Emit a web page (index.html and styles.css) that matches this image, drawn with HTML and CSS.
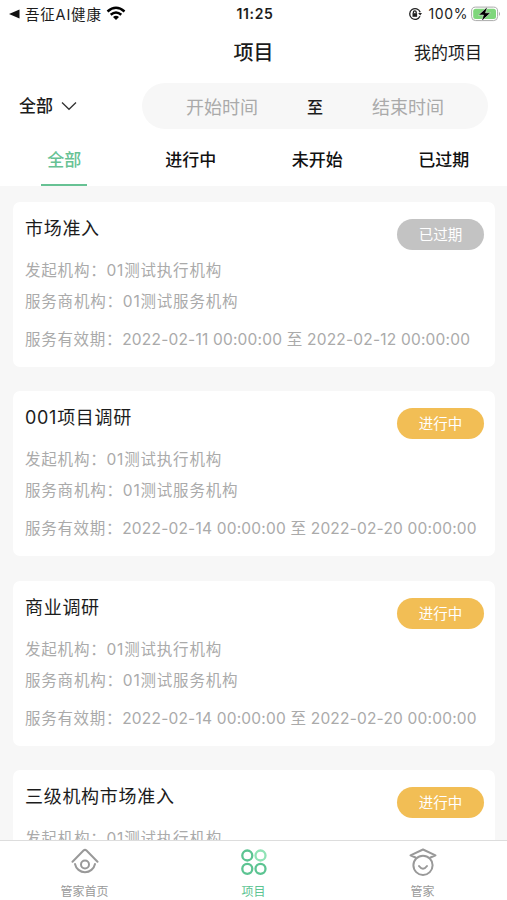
FILE: index.html
```html
<!DOCTYPE html>
<html lang="zh-CN">
<head>
    <meta charset="UTF-8">
    <meta name="viewport" content="width=device-width, initial-scale=1.0">
    <title>项目</title>
    <link rel="stylesheet" href="styles.css">
</head>

<body>
    <div class="status-bar">
        <div class="status-left">
            <svg width="11" height="10" viewBox="0 0 11 10"><path d="M0 5 L10.500 0.500 V9.500 Z" fill="#111"/></svg>
            <span class="status-app">吾征AI健康</span>
            <svg class="wifi" width="20" height="15" viewBox="0 0 20 15" fill="none" stroke="#000" stroke-width="2.500">
                <path d="M1.500 5.500 Q10 -2 18.500 5.500"/>
                <path d="M4.700 8.800 Q10 4.200 15.300 8.800"/>
                <path d="M10 14 L7 11 Q10 8.700 13 11 Z" fill="#000" stroke="none"/>
            </svg>
        </div>
        <div class="status-time">11:25</div>
        <div class="status-right">
            <svg width="14" height="14" viewBox="0 0 14 14" fill="none" stroke="#222" stroke-width="1.300">
                <path d="M12 9.300 A5.400 5.400 0 1 1 12.200 5.200"/>
                <path d="M10.200 6 H14 L12.200 8.500 Z" fill="#222" stroke="none"/>
                <rect x="4.500" y="6.200" width="4.600" height="3.600" fill="#222" stroke="none"/>
                <path d="M5.400 6.500 V5.200 A1.400 1.400 0 0 1 8.200 5.200 V6.500"/>
            </svg>
            <span class="status-percent">100%</span>
            <svg width="30" height="16" viewBox="0 0 30 16">
                <rect x="0.600" y="1.100" width="26" height="13.500" rx="4" fill="#fff" stroke="#aaa"/>
                <rect x="2.200" y="2.700" width="22.800" height="10.300" rx="2.500" fill="#7fd67c"/>
                <path d="M28 5.700 Q30 7.800 28 10 Z" fill="#aaa"/>
                <path d="M16.500 0.800 L7.500 9 H12.500 L10.500 15.200 L19.500 6.800 H14.500 Z" fill="#000" stroke="#fff" stroke-width="0.500"/>
            </svg>
        </div>
    </div>

    <div class="nav-bar">
        <h1>项目</h1>
        <a class="my-project">我的项目</a>
    </div>

    <div class="filter">
        <div class="filter-type">
            <span>全部</span>
            <svg width="16" height="10" viewBox="0 0 16 10" fill="none" stroke="#333" stroke-width="1.300"><path d="M1 1.500 L8 8.300 L15 1.500"/></svg>
        </div>
        <div class="date-range">
            <span class="date">开始时间</span>
            <span class="to">至</span>
            <span class="date">结束时间</span>
        </div>
    </div>

    <div class="tabs">
        <div class="tab active"><span>全部</span></div>
        <div class="tab"><span>进行中</span></div>
        <div class="tab"><span>未开始</span></div>
        <div class="tab"><span>已过期</span></div>
    </div>

    <div class="list">
        <div class="card">
            <div class="card-head">
                <h2>市场准入</h2>
                <span class="badge expired">已过期</span>
            </div>
            <p>发起机构：01测试执行机构</p>
            <p>服务商机构：01测试服务机构</p>
            <p class="period">服务有效期：<span class="dates">2022-02-11 00:00:00 至 2022-02-12 00:00:00</span></p>
        </div>
        <div class="card">
            <div class="card-head">
                <h2>001项目调研</h2>
                <span class="badge">进行中</span>
            </div>
            <p>发起机构：01测试执行机构</p>
            <p>服务商机构：01测试服务机构</p>
            <p class="period">服务有效期：<span class="dates">2022-02-14 00:00:00 至 2022-02-20 00:00:00</span></p>
        </div>
        <div class="card">
            <div class="card-head">
                <h2>商业调研</h2>
                <span class="badge">进行中</span>
            </div>
            <p>发起机构：01测试执行机构</p>
            <p>服务商机构：01测试服务机构</p>
            <p class="period">服务有效期：<span class="dates">2022-02-14 00:00:00 至 2022-02-20 00:00:00</span></p>
        </div>
        <div class="card">
            <div class="card-head">
                <h2>三级机构市场准入</h2>
                <span class="badge">进行中</span>
            </div>
            <p>发起机构：01测试执行机构</p>
        </div>
    </div>

    <div class="tab-bar">
        <div class="tab-item">
            <svg width="28" height="28" viewBox="0 0 28 28" fill="none" stroke="#999" stroke-width="2" stroke-linecap="round" stroke-linejoin="round">
                <path d="M1.500 13.700 L12.500 2.500 Q14 1.200 15.500 2.500 L26.500 13.700"/>
                <path d="M4 16 A10.200 10.200 0 0 0 24 16"/>
                <circle cx="14" cy="16.500" r="4"/>
            </svg>
            <span>管家首页</span>
        </div>
        <div class="tab-item current">
            <svg width="28" height="28" viewBox="0 0 28 28" fill="none" stroke="#5cc492" stroke-width="2.300">
                <circle cx="7.300" cy="7.500" r="5"/>
                <circle cx="20.500" cy="7.500" r="5" stroke="#8fe3b5"/>
                <circle cx="7.300" cy="20.800" r="5"/>
                <circle cx="20.500" cy="20.800" r="5"/>
            </svg>
            <span>项目</span>
        </div>
        <div class="tab-item">
            <svg width="28" height="28" viewBox="0 0 28 28" fill="none" stroke="#999" stroke-width="2" stroke-linecap="round" stroke-linejoin="round">
                <path d="M6.500 9.500 L1.500 7.300 L14 1.500 L26.500 7.300 L21.500 9.500"/>
                <circle cx="14" cy="17.300" r="9.600"/>
                <path d="M10 18 Q14 23.500 18 18"/>
            </svg>
            <span>管家</span>
        </div>
    </div>
</body>
</html>
```

FILE: styles.css
```css
* {
    box-sizing: border-box;
}
body {
    margin: 0;
    height: 900px;
    display: flex;
    flex-direction: column;
    overflow: hidden;
    background-color: #fff;
    color: #1c1c1c;
    font-family: Inter, "Noto Sans CJK SC", sans-serif;
}
h1, h2, p {
    margin: 0;
}
svg {
    display: block;
    flex: none;
}
.status-bar {
    height: 27px;
    flex: none;
    display: grid;
    grid-template-columns: 1fr auto 1fr;
    align-items: center;
    padding: 0 6px 0 9px;
}
.status-left, .status-right {
    display: flex;
    align-items: center;
}
.status-right {
    justify-content: flex-end;
}
.status-app {
    margin-left: 5px;
    font-size: 14.5px;
    letter-spacing: 0.8px;
    white-space: nowrap;
}
.wifi {
    margin-left: 4px;
}
.status-time {
    font-size: 14px;
    font-weight: 600;
    letter-spacing: 0.6px;
}
.status-percent {
    margin: 0 3px 0 6px;
    font-size: 14px;
    letter-spacing: 0.6px;
}
.nav-bar {
    height: 49px;
    flex: none;
    display: grid;
    grid-template-columns: 1fr auto 1fr;
    align-items: center;
    padding: 0 25px;
}
.nav-bar h1 {
    grid-column: 2;
    font-size: 20px;
    font-weight: 500;
}
.my-project {
    justify-self: end;
    font-size: 17px;
}
.filter {
    height: 59px;
    flex: none;
    display: flex;
    align-items: center;
    justify-content: space-between;
    padding: 0 19px;
}
.filter-type {
    display: flex;
    align-items: center;
    gap: 8px;
    font-size: 17px;
    font-weight: 500;
    line-height: 24px;
}
.date-range {
    width: 346px;
    height: 46px;
    display: grid;
    grid-template-columns: 160px 26px 160px;
    align-items: center;
    text-align: center;
    border-radius: 23px;
    background-color: #f7f7f7;
}
.date {
    font-size: 18px;
    color: #aaa;
}
.to {
    font-size: 16px;
    font-weight: 500;
}
.tabs {
    height: 51px;
    flex: none;
    display: grid;
    grid-template-columns: repeat(4, 1fr);
    padding-left: 1px;
}
.tab {
    display: flex;
    justify-content: center;
    font-size: 17px;
    font-weight: 500;
    line-height: 51px;
    color: #111;
}
.tab span {
    height: 51px;
}
.tab.active span {
    width: 46px;
    text-align: center;
    color: #67c294;
    border-bottom: 2px solid #67c294;
}
.list {
    flex: 1;
    min-height: 0;
    overflow: hidden;
    padding: 16px 12px 0 13px;
    background-color: #f7f7f7;
}
.card {
    height: 165px;
    margin-bottom: 24.4px;
    padding: 12px 11px 0 12px;
    border-radius: 7px;
    background-color: #fff;
}
.card-head {
    height: 44px;
    display: flex;
    justify-content: space-between;
}
.card h2 {
    font-size: 18px;
    font-weight: 400;
    line-height: 30px;
    letter-spacing: 0.7px;
}
.badge {
    width: 87px;
    height: 31px;
    margin-top: 5px;
    border-radius: 16px;
    background-color: #f2be55;
    color: #fff;
    font-size: 14.5px;
    line-height: 31px;
    text-align: center;
}
.badge.expired {
    background-color: #c3c3c3;
}
.card p {
    height: 31px;
    font-size: 15.5px;
    line-height: 26px;
    letter-spacing: 0.8px;
    color: #aaa;
    white-space: nowrap;
}
.card .period {
    margin-top: 7px;
    letter-spacing: 0.7px;
}
.dates {
    letter-spacing: 0.2px;
}
.tab-bar {
    height: 60px;
    flex: none;
    display: grid;
    grid-template-columns: repeat(3, 1fr);
    border-top: 1px solid #ddd;
    background-color: #fff;
}
.tab-item {
    display: flex;
    flex-direction: column;
    align-items: center;
    padding-top: 7px;
    font-size: 12px;
    line-height: 18px;
    color: #999;
}
.tab-item span {
    margin-top: 7px;
}
.tab-item.current {
    color: #5cc492;
}
```
